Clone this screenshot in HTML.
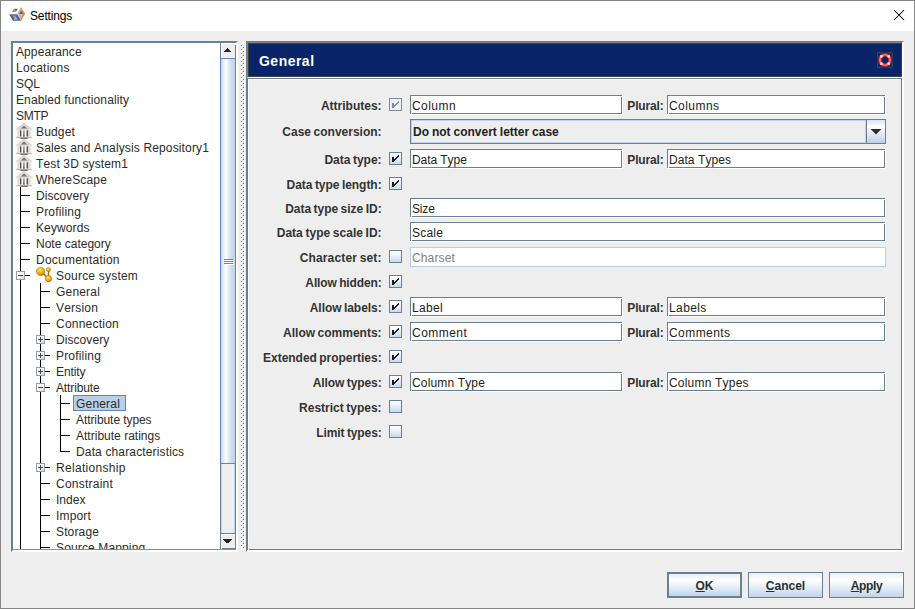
<!DOCTYPE html><html><head><meta charset="utf-8"><title>Settings</title><style>
*{box-sizing:border-box;margin:0;padding:0}
html,body{width:915px;height:609px;overflow:hidden;background:#eeeeee}
body{position:relative;font-kerning:none;font-family:"Liberation Sans",Arial,sans-serif;font-size:12px;color:#222}
.a{position:absolute}
#win{left:0;top:0;width:915px;height:609px;border:1px solid #858585;background:#eeeeee}
#title{left:1px;top:1px;width:913px;height:30px;background:#fff}
#ttext{left:30px;top:8px;letter-spacing:-0.15px;font-size:12px;line-height:16px;color:#000;white-space:nowrap}
/* tree panel */
#tree{left:11px;top:41px;width:227px;height:511px;background:#fff;border-top:2px solid #6b7f93;border-left:2px solid #6b7f93;border-right:2px solid #fff;border-bottom:2px solid #fff}
#treeb{left:13px;top:549px;width:223px;height:1px;background:#7d90a4}
#tv{left:13px;top:43px;width:207px;height:506px;overflow:hidden;background:#fff}
.r{position:absolute;left:0;height:16px;line-height:18px;white-space:nowrap;color:#2b2b2b;font-size:12px}
.ln{position:absolute;background:#000}
.sel{position:absolute;background:#b8cfe5;border:1px solid #6382bf}
.ex{position:absolute;z-index:2;width:9px;height:9px;border:1px solid #9c9c9c;background:linear-gradient(135deg,#fff 0%,#fff 40%,#d4d4d4 100%)}
.ex i{position:absolute;left:1px;top:3px;width:5px;height:1px;background:#2a3f9a}
.ex b{position:absolute;left:3px;top:1px;width:1px;height:5px;background:#2a3f9a}
/* scrollbar */
#sb{left:220px;top:43px;width:16px;height:506px;background:#eeeeee;border-left:1px solid #6b7f93;border-right:1px solid #6b7f93}
.sbl{position:absolute;top:0;width:1px;height:506px;background:#c3d5ea}
#thumb{left:220px;top:58px;width:16px;height:406px;border:1px solid #6382bf;border-right-color:#7187a0;background:linear-gradient(90deg,#c9dbef 0%,#ffffff 36%,#d6e3f2 64%,#bcd1e8 100%)}
.gr{position:absolute;left:3px;width:9px;height:1px;background:#6382bf}
.grw{position:absolute;left:4px;width:9px;height:1px;background:#fff}
/* right panel */
#rp{left:246px;top:41px;width:658px;height:511px;border-top:1px solid #6b7f93;border-left:1px solid #6b7f93;border-right:1px solid #fff;border-bottom:1px solid #fff}
#hd{left:247px;top:42px;width:656px;height:36px;border-top:1px solid #808080;border-left:1px solid #808080;border-right:1px solid #fff;border-bottom:1px solid #fff}
#hd2{left:248px;top:43px;width:654px;height:34px;background:#0a246a;border:1px solid #404040}
#htext{left:259px;top:52px;font-size:14px;line-height:18px;font-weight:bold;color:#fff;white-space:nowrap}
#cp{left:247px;top:78px;width:656px;height:473px}
#cp1{left:247px;top:78px;width:655px;height:472px;border:1px solid #6b7f93}
#cp2{left:248px;top:79px;width:653px;height:470px;border-top:1px solid #fafafa}
#cp2b{left:248px;top:79px;width:1px;height:471px;background:#fafafa}
#cp3{left:247px;top:550px;width:656px;height:1px;background:#fff}
#cp4{left:902px;top:78px;width:1px;height:473px;background:#fff}
.lb{position:absolute;right:533.4px;height:20px;line-height:22px;font-weight:bold;color:#333;white-space:nowrap;font-size:12px;text-align:right}
.pl{position:absolute;left:627.3px;height:20px;line-height:22px;font-weight:bold;color:#333;white-space:nowrap;font-size:12px}
.tf{position:absolute;height:20px;background:#fff;border-right:1px solid #fff;border-bottom:1px solid #fff}
.tf u{position:absolute;left:0;top:0;right:0;bottom:0;border:1px solid #6b7f93;background:#fff;text-decoration:none}
.tf s{position:absolute;left:2px;top:0;height:20px;line-height:22px;text-decoration:none;color:#222;white-space:nowrap;font-size:12px}
.tf i{position:absolute;width:1px;height:1px;background:#fff}
.tf.dis{border:1px solid #b8cfe5}
.tf.dis s{color:#808080;left:1px;top:-1px}
.cb{position:absolute;left:389px;width:13px;height:13px;border:1px solid #6b7f93;background:linear-gradient(180deg,#ffffff 0%,#f4f8fc 25%,#c6d9ee 100%)}
.cb.d{border-color:#7b8da0;background:#f0f0f0}
.cb svg{position:absolute;left:-1px;top:-1px}
.btn{position:absolute;top:572px;width:75px;height:26px;border:1px solid #6b7f93;background:linear-gradient(180deg,#e6eef8 0%,#ffffff 28%,#f1f6fb 45%,#c2d4e8 100%);text-align:center;line-height:26px;font-weight:bold;color:#2e2e2e;font-size:12px}
.btn.def{border-width:2px;line-height:24px}
.btn u{text-decoration:underline}
</style></head><body>
<div id="win" class="a"></div>
<div id="title" class="a"></div>
<svg class="a" style="left:8px;top:6px" width="18" height="16" viewBox="8 6 18 16">
<defs><linearGradient id="og" x1="0" y1="0" x2="1" y2="0"><stop offset="0" stop-color="#efc39c"/><stop offset="0.5" stop-color="#e29a62"/><stop offset="1" stop-color="#d27c3c"/></linearGradient></defs>
<polygon points="9.1,14.2 17.2,14.2 21.2,20.8 13,20.8" fill="#4668a6"/>
<polygon points="12.2,15.5 15.9,15.5 14.3,18.3" fill="#e08a3c"/>
<polygon points="15.6,16.6 17.6,19.4 13.8,19.4" fill="#b4c6ee"/>
<polygon points="21,7 25.1,13.8 21.2,20.5 17.3,13.6" fill="url(#og)"/>
<polygon points="21,10.4 23,14 19.2,14" fill="#4668a6"/>
<polygon points="19.4,14 22.8,14 21.2,17.2" fill="#b4c6ee"/>
<polygon points="13.6,8.8 14.7,8.8 16,12 12,12" fill="#d98a4a"/>
<polygon points="14.6,8.8 17.9,8.8 16.5,11 15.5,11" fill="#4668a6"/>
</svg>
<div id="ttext" class="a">Settings</div>
<svg class="a" style="left:893px;top:9px" width="13" height="13" viewBox="0 0 13 13"><path d="M1 1 L11 11 M11 1 L1 11" stroke="#000" stroke-width="1.05" fill="none"/></svg>
<div id="tree" class="a"></div>
<div id="tv" class="a">
<div class="r" style="top:0px"><span style="position:absolute;left:3px;top:0"><span style="letter-spacing:0.098px">Appearance</span></span></div>
<div class="r" style="top:16px"><span style="position:absolute;left:3px;top:0"><span style="letter-spacing:0.265px">Locations</span></span></div>
<div class="r" style="top:32px"><span style="position:absolute;left:3px;top:0"><span style="letter-spacing:-0.004px">SQL</span></span></div>
<div class="r" style="top:48px"><span style="position:absolute;left:3px;top:0"><span style="letter-spacing:0.108px">Enabled functionality</span></span></div>
<div class="r" style="top:64px"><span style="position:absolute;left:3px;top:0"><span style="letter-spacing:-0.271px">SMTP</span></span></div>
<div class="r" style="top:80px"><svg style="position:absolute;left:3px;top:0" width="16" height="17" viewBox="0 0 16 17">
<polygon points="8,0.1 16,6.2 15.4,6.9 0.6,6.9 0,6.2" fill="#e0e0e0"/>
<path d="M8 0.4 L15.6 6.2 M8 0.4 L0.4 6.2" stroke="#b4b4b4" stroke-width="0.9" fill="none" stroke-dasharray="1.1 0.7"/>
<polygon points="8,2.6 11.4,5.5 4.6,5.5" fill="#767676"/>
<rect x="3.6" y="5.5" width="8.8" height="0.8" fill="#a8a8a8"/>
<rect x="1.2" y="6.6" width="13.6" height="7.6" fill="#eeeeee"/>
<rect x="1.4" y="7" width="2.3" height="7.1" fill="#dedede"/>
<rect x="12.3" y="7" width="2.3" height="7.1" fill="#dedede"/>
<rect x="4" y="7.3" width="1.5" height="6.2" fill="#505050"/>
<rect x="5.7" y="7" width="1.5" height="7" fill="#ffffff"/>
<rect x="7.3" y="7.4" width="1.35" height="3.7" fill="#747474"/>
<rect x="7.3" y="11.1" width="1.35" height="2.7" fill="#7c3208"/>
<rect x="8.85" y="7" width="1.5" height="7" fill="#ffffff"/>
<rect x="10.6" y="7.3" width="1.5" height="6.2" fill="#505050"/>
<rect x="0.3" y="14" width="15.4" height="1.1" fill="#b8b8b8"/>
<rect x="4.4" y="14.7" width="7.4" height="1.3" fill="#707070"/>
</svg><span style="position:absolute;left:23px;top:0"><span style="letter-spacing:0.161px">Budget</span></span></div>
<div class="r" style="top:96px"><svg style="position:absolute;left:3px;top:0" width="16" height="17" viewBox="0 0 16 17">
<polygon points="8,0.1 16,6.2 15.4,6.9 0.6,6.9 0,6.2" fill="#e0e0e0"/>
<path d="M8 0.4 L15.6 6.2 M8 0.4 L0.4 6.2" stroke="#b4b4b4" stroke-width="0.9" fill="none" stroke-dasharray="1.1 0.7"/>
<polygon points="8,2.6 11.4,5.5 4.6,5.5" fill="#767676"/>
<rect x="3.6" y="5.5" width="8.8" height="0.8" fill="#a8a8a8"/>
<rect x="1.2" y="6.6" width="13.6" height="7.6" fill="#eeeeee"/>
<rect x="1.4" y="7" width="2.3" height="7.1" fill="#dedede"/>
<rect x="12.3" y="7" width="2.3" height="7.1" fill="#dedede"/>
<rect x="4" y="7.3" width="1.5" height="6.2" fill="#505050"/>
<rect x="5.7" y="7" width="1.5" height="7" fill="#ffffff"/>
<rect x="7.3" y="7.4" width="1.35" height="3.7" fill="#747474"/>
<rect x="7.3" y="11.1" width="1.35" height="2.7" fill="#7c3208"/>
<rect x="8.85" y="7" width="1.5" height="7" fill="#ffffff"/>
<rect x="10.6" y="7.3" width="1.5" height="6.2" fill="#505050"/>
<rect x="0.3" y="14" width="15.4" height="1.1" fill="#b8b8b8"/>
<rect x="4.4" y="14.7" width="7.4" height="1.3" fill="#707070"/>
</svg><span style="position:absolute;left:23px;top:0"><span style="letter-spacing:0.141px">Sales and Analysis Repository1</span></span></div>
<div class="r" style="top:112px"><svg style="position:absolute;left:3px;top:0" width="16" height="17" viewBox="0 0 16 17">
<polygon points="8,0.1 16,6.2 15.4,6.9 0.6,6.9 0,6.2" fill="#e0e0e0"/>
<path d="M8 0.4 L15.6 6.2 M8 0.4 L0.4 6.2" stroke="#b4b4b4" stroke-width="0.9" fill="none" stroke-dasharray="1.1 0.7"/>
<polygon points="8,2.6 11.4,5.5 4.6,5.5" fill="#767676"/>
<rect x="3.6" y="5.5" width="8.8" height="0.8" fill="#a8a8a8"/>
<rect x="1.2" y="6.6" width="13.6" height="7.6" fill="#eeeeee"/>
<rect x="1.4" y="7" width="2.3" height="7.1" fill="#dedede"/>
<rect x="12.3" y="7" width="2.3" height="7.1" fill="#dedede"/>
<rect x="4" y="7.3" width="1.5" height="6.2" fill="#505050"/>
<rect x="5.7" y="7" width="1.5" height="7" fill="#ffffff"/>
<rect x="7.3" y="7.4" width="1.35" height="3.7" fill="#747474"/>
<rect x="7.3" y="11.1" width="1.35" height="2.7" fill="#7c3208"/>
<rect x="8.85" y="7" width="1.5" height="7" fill="#ffffff"/>
<rect x="10.6" y="7.3" width="1.5" height="6.2" fill="#505050"/>
<rect x="0.3" y="14" width="15.4" height="1.1" fill="#b8b8b8"/>
<rect x="4.4" y="14.7" width="7.4" height="1.3" fill="#707070"/>
</svg><span style="position:absolute;left:23px;top:0"><span style="letter-spacing:0.131px">Test 3D system1</span></span></div>
<div class="r" style="top:128px"><svg style="position:absolute;left:3px;top:0" width="16" height="17" viewBox="0 0 16 17">
<polygon points="8,0.1 16,6.2 15.4,6.9 0.6,6.9 0,6.2" fill="#e0e0e0"/>
<path d="M8 0.4 L15.6 6.2 M8 0.4 L0.4 6.2" stroke="#b4b4b4" stroke-width="0.9" fill="none" stroke-dasharray="1.1 0.7"/>
<polygon points="8,2.6 11.4,5.5 4.6,5.5" fill="#767676"/>
<rect x="3.6" y="5.5" width="8.8" height="0.8" fill="#a8a8a8"/>
<rect x="1.2" y="6.6" width="13.6" height="7.6" fill="#eeeeee"/>
<rect x="1.4" y="7" width="2.3" height="7.1" fill="#dedede"/>
<rect x="12.3" y="7" width="2.3" height="7.1" fill="#dedede"/>
<rect x="4" y="7.3" width="1.5" height="6.2" fill="#505050"/>
<rect x="5.7" y="7" width="1.5" height="7" fill="#ffffff"/>
<rect x="7.3" y="7.4" width="1.35" height="3.7" fill="#747474"/>
<rect x="7.3" y="11.1" width="1.35" height="2.7" fill="#7c3208"/>
<rect x="8.85" y="7" width="1.5" height="7" fill="#ffffff"/>
<rect x="10.6" y="7.3" width="1.5" height="6.2" fill="#505050"/>
<rect x="0.3" y="14" width="15.4" height="1.1" fill="#b8b8b8"/>
<rect x="4.4" y="14.7" width="7.4" height="1.3" fill="#707070"/>
</svg><span style="position:absolute;left:23px;top:0"><span style="letter-spacing:0.163px">WhereScape</span></span></div>
<div class="r" style="top:144px"><span class="ln" style="left:7px;top:8px;width:10px;height:1px"></span><span style="position:absolute;left:23px;top:0"><span style="letter-spacing:0.064px">Discovery</span></span></div>
<div class="r" style="top:160px"><span class="ln" style="left:7px;top:8px;width:10px;height:1px"></span><span style="position:absolute;left:23px;top:0"><span style="letter-spacing:0.183px">Profiling</span></span></div>
<div class="r" style="top:176px"><span class="ln" style="left:7px;top:8px;width:10px;height:1px"></span><span style="position:absolute;left:23px;top:0"><span style="letter-spacing:0.102px">Keywords</span></span></div>
<div class="r" style="top:192px"><span class="ln" style="left:7px;top:8px;width:10px;height:1px"></span><span style="position:absolute;left:23px;top:0"><span style="letter-spacing:0.003px">Note category</span></span></div>
<div class="r" style="top:208px"><span class="ln" style="left:7px;top:8px;width:10px;height:1px"></span><span style="position:absolute;left:23px;top:0"><span style="letter-spacing:0.234px">Documentation</span></span></div>
<div class="r" style="top:224px"><span class="ln" style="left:12px;top:8px;width:5px;height:1px"></span><span class="ex" style="left:3px;top:4px"><i></i></span><svg style="position:absolute;left:23px;top:0" width="17" height="16" viewBox="0 0 17 16">
<defs><radialGradient id="gb" cx="0.42" cy="0.32" r="0.7"><stop offset="0" stop-color="#fff0a8"/><stop offset="0.3" stop-color="#fcc622"/><stop offset="0.72" stop-color="#e6a20e"/><stop offset="1" stop-color="#96640e"/></radialGradient></defs>
<path d="M5 4.5 L12.5 11.6 M12.5 2.6 L12.5 11.6" stroke="#9a6c20" stroke-width="1.5" fill="none"/>
<ellipse cx="10.5" cy="15" rx="3.5" ry="0.8" fill="#d8c8a0" opacity="0.5"/>
<circle cx="4.6" cy="4.4" r="4.2" fill="url(#gb)" stroke="#a06e14" stroke-width="0.5"/>
<circle cx="12.5" cy="2.5" r="2.1" fill="url(#gb)" stroke="#a06e14" stroke-width="0.5"/>
<circle cx="12.5" cy="11.6" r="3.2" fill="url(#gb)" stroke="#a06e14" stroke-width="0.5"/>
</svg><span style="position:absolute;left:43px;top:0"><span style="letter-spacing:0.203px">Source system</span></span></div>
<div class="r" style="top:240px"><span class="ln" style="left:27px;top:8px;width:10px;height:1px"></span><span style="position:absolute;left:43px;top:0"><span style="letter-spacing:0.187px">General</span></span></div>
<div class="r" style="top:256px"><span class="ln" style="left:27px;top:8px;width:10px;height:1px"></span><span style="position:absolute;left:43px;top:0"><span style="letter-spacing:0.188px">Version</span></span></div>
<div class="r" style="top:272px"><span class="ln" style="left:27px;top:8px;width:10px;height:1px"></span><span style="position:absolute;left:43px;top:0"><span style="letter-spacing:0.229px">Connection</span></span></div>
<div class="r" style="top:288px"><span class="ln" style="left:32px;top:8px;width:5px;height:1px"></span><span class="ex" style="left:23px;top:4px"><i></i><b></b></span><span style="position:absolute;left:43px;top:0"><span style="letter-spacing:0.064px">Discovery</span></span></div>
<div class="r" style="top:304px"><span class="ln" style="left:32px;top:8px;width:5px;height:1px"></span><span class="ex" style="left:23px;top:4px"><i></i><b></b></span><span style="position:absolute;left:43px;top:0"><span style="letter-spacing:0.183px">Profiling</span></span></div>
<div class="r" style="top:320px"><span class="ln" style="left:32px;top:8px;width:5px;height:1px"></span><span class="ex" style="left:23px;top:4px"><i></i><b></b></span><span style="position:absolute;left:43px;top:0"><span style="letter-spacing:-0.127px">Entity</span></span></div>
<div class="r" style="top:336px"><span class="ln" style="left:32px;top:8px;width:5px;height:1px"></span><span class="ex" style="left:23px;top:4px"><i></i></span><span style="position:absolute;left:43px;top:0"><span style="letter-spacing:-0.132px">Attribute</span></span></div>
<div class="r" style="top:352px"><span class="ln" style="left:47px;top:8px;width:10px;height:1px"></span><span class="sel" style="left:60px;top:0;width:53px;height:16px"></span><span style="position:absolute;left:63px;top:0"><span style="letter-spacing:0.187px">General</span></span></div>
<div class="r" style="top:368px"><span class="ln" style="left:47px;top:8px;width:10px;height:1px"></span><span style="position:absolute;left:63px;top:0"><span style="letter-spacing:-0.080px">Attribute types</span></span></div>
<div class="r" style="top:384px"><span class="ln" style="left:47px;top:8px;width:10px;height:1px"></span><span style="position:absolute;left:63px;top:0"><span style="letter-spacing:0.012px">Attribute ratings</span></span></div>
<div class="r" style="top:400px"><span class="ln" style="left:47px;top:8px;width:10px;height:1px"></span><span style="position:absolute;left:63px;top:0"><span style="letter-spacing:0.144px">Data characteristics</span></span></div>
<div class="r" style="top:416px"><span class="ln" style="left:32px;top:8px;width:5px;height:1px"></span><span class="ex" style="left:23px;top:4px"><i></i><b></b></span><span style="position:absolute;left:43px;top:0"><span style="letter-spacing:0.309px">Relationship</span></span></div>
<div class="r" style="top:432px"><span class="ln" style="left:27px;top:8px;width:10px;height:1px"></span><span style="position:absolute;left:43px;top:0"><span style="letter-spacing:0.231px">Constraint</span></span></div>
<div class="r" style="top:448px"><span class="ln" style="left:27px;top:8px;width:10px;height:1px"></span><span style="position:absolute;left:43px;top:0"><span style="letter-spacing:0.029px">Index</span></span></div>
<div class="r" style="top:464px"><span class="ln" style="left:27px;top:8px;width:10px;height:1px"></span><span style="position:absolute;left:43px;top:0"><span style="letter-spacing:0.165px">Import</span></span></div>
<div class="r" style="top:480px"><span class="ln" style="left:27px;top:8px;width:10px;height:1px"></span><span style="position:absolute;left:43px;top:0"><span style="letter-spacing:0.139px">Storage</span></span></div>
<div class="r" style="top:496px"><span class="ln" style="left:27px;top:8px;width:10px;height:1px"></span><span style="position:absolute;left:43px;top:0"><span style="letter-spacing:0.133px">Source Mapping</span></span></div>
<span class="ln" style="left:7px;top:144px;width:1px;height:374px"></span>
<span class="ln" style="left:27px;top:240px;width:1px;height:278px"></span>
<span class="ln" style="left:47px;top:352px;width:1px;height:57px"></span>
</div>
<div id="treeb" class="a"></div>
<div id="sb" class="a"><span class="sbl" style="left:0"></span><span class="sbl" style="left:13px"></span></div>
<div class="a" style="left:221px;top:43px;width:14px;height:15px;background:#eeeeee;border-top:1px solid #fff;border-left:1px solid #fff"></div>
<svg class="a" style="left:221px;top:43px" width="14" height="15" viewBox="221 43 14 15" shape-rendering="crispEdges"><path d="M227 48h1v1h-1z M226 49h3v1h-3z M225 50h5v1h-5z M224 51h7v1h-7z" fill="#262626"/></svg>
<div class="a" style="left:235px;top:43px;width:1px;height:2px;background:#f6f6f6"></div>
<div class="a" style="left:221px;top:533px;width:14px;height:16px;background:#eeeeee;border-top:1px solid #6b7f93;border-bottom:1px solid #6b7f93"></div>
<div class="a" style="left:221px;top:534px;width:14px;height:15px;border-top:1px solid #fff;border-left:1px solid #fff"></div>
<svg class="a" style="left:221px;top:534px" width="14" height="15" viewBox="221 534 14 15" shape-rendering="crispEdges"><path d="M223 539h9v1h-9z M224 540h7v1h-7z M225 541h5v1h-5z M226 542h3v1h-3z" fill="#262626"/></svg>
<div id="thumb" class="a"><span class="gr" style="top:200px"></span><span class="grw" style="top:201px"></span><span class="gr" style="top:202px"></span><span class="grw" style="top:203px"></span><span class="gr" style="top:204px"></span><span class="grw" style="top:205px"></span></div>
<svg class="a" style="left:240px;top:44px" width="6" height="506"><defs><pattern id="dp" x="0" y="1" width="6" height="4" patternUnits="userSpaceOnUse"><rect x="1" y="0" width="1" height="1" fill="#6d7d90"/><rect x="2" y="1" width="1" height="1" fill="#fff"/><rect x="3" y="2" width="1" height="1" fill="#6d7d90"/><rect x="4" y="3" width="1" height="1" fill="#fff"/></pattern></defs><rect x="0" y="1" width="6" height="504" fill="url(#dp)"/></svg>
<div id="rp" class="a"></div>
<div id="hd" class="a"></div><div id="hd2" class="a"></div>
<div id="htext" class="a"><span style="letter-spacing:0.480px">General</span></div>
<svg class="a" style="left:875px;top:50px" width="20" height="20" viewBox="-10 -10 20 20">
<defs><radialGradient id="lr" cx="0" cy="0" r="7" gradientUnits="userSpaceOnUse"><stop offset="0.44" stop-color="#a00c14"/><stop offset="0.58" stop-color="#e83a40"/><stop offset="0.74" stop-color="#ff8e8e"/><stop offset="0.88" stop-color="#e0282e"/><stop offset="1" stop-color="#b01018"/></radialGradient></defs>
<path d="M-6.6 -7.6 Q0 -5.6 6.6 -7.6 Q7.6 -7.6 7.6 -6.6 Q5.6 0 7.6 6.6 Q7.6 7.6 6.6 7.6 Q0 5.6 -6.6 7.6 Q-7.6 7.6 -7.6 6.6 Q-5.6 0 -7.6 -6.6 Q-7.6 -7.6 -6.6 -7.6 Z" fill="none" stroke="#8f7a2c" stroke-width="0.7" opacity="0.7"/>
<circle cx="0" cy="0" r="5.05" fill="none" stroke="url(#lr)" stroke-width="3.7"/>
<g stroke="#eaf0f6" stroke-width="1.8">
<line x1="2.7" y1="-2.7" x2="4.55" y2="-4.55"/><line x1="-2.7" y1="-2.7" x2="-4.55" y2="-4.55"/><line x1="2.7" y1="2.7" x2="4.55" y2="4.55"/><line x1="-2.7" y1="2.7" x2="-4.55" y2="4.55"/>
</g></svg>
<div id="cp1" class="a"></div><div id="cp2" class="a"></div><div id="cp2b" class="a"></div><div id="cp3" class="a"></div><div id="cp4" class="a"></div>
<div class="lb" style="top:95px"><span style="word-spacing:-0.8px;letter-spacing:0.000px">Attributes:</span></div>
<div class="cb d" style="top:98px"><svg width="13" height="13" viewBox="0 0 13 13" shape-rendering="crispEdges"><path d="M3 5h2v5h-2z M5 7h1v2h-1z M6 6h1v2h-1z M7 5h1v2h-1z M8 4h1v2h-1z M9 3h1v2h-1z" fill="#7b8da0"/></svg></div>
<div class="tf" style="left:410px;top:95px;width:213px"><u></u><i style="left:1px;top:18px"></i><i style="right:0;top:1px"></i><s><span style="letter-spacing:0.442px">Column</span></s></div>
<div class="pl" style="top:95px"><span style="word-spacing:-0.8px;letter-spacing:-0.143px">Plural:</span></div>
<div class="tf" style="left:667px;top:95px;width:219px"><u></u><i style="left:1px;top:18px"></i><i style="right:0;top:1px"></i><s><span style="letter-spacing:0.450px">Columns</span></s></div>
<div class="lb" style="top:121px"><span style="word-spacing:-0.8px;letter-spacing:0.000px">Case conversion:</span></div>
<div class="a" style="left:410px;top:119px;width:476px;height:25px;border:1px solid #6b7f93;background:#eeeeee"><div class="a" style="left:0;top:0;width:455px;height:23px;border:1px solid #bfd3ea"></div><div class="a" style="left:2px;top:1px;height:22px;line-height:22px;font-weight:bold;color:#222;white-space:nowrap;word-spacing:-0.4px">Do not convert letter case</div><div class="a" style="left:455px;top:0;width:19px;height:23px;border-left:1px solid #6b7f93;background:linear-gradient(180deg,#dbe7f4 0%,#ffffff 30%,#eef3f9 50%,#bacfe5 100%)"></div><svg class="a" style="left:456px;top:0" width="18" height="23" viewBox="0 0 18 23"><polygon points="3.5,9 14.5,9 9,14.6" fill="#2d2d2d"/></svg></div>
<div class="lb" style="top:149px"><span style="word-spacing:-0.8px;letter-spacing:0.000px">Data type:</span></div>
<div class="cb" style="top:152px"><svg width="13" height="13" viewBox="0 0 13 13" shape-rendering="crispEdges"><path d="M3 5h2v5h-2z M5 7h1v2h-1z M6 6h1v2h-1z M7 5h1v2h-1z M8 4h1v2h-1z M9 3h1v2h-1z" fill="#1a1a1a"/></svg></div>
<div class="tf" style="left:410px;top:149px;width:213px"><u></u><i style="left:1px;top:18px"></i><i style="right:0;top:1px"></i><s><span style="letter-spacing:-0.068px">Data Type</span></s></div>
<div class="pl" style="top:149px"><span style="word-spacing:-0.8px;letter-spacing:-0.143px">Plural:</span></div>
<div class="tf" style="left:667px;top:149px;width:219px"><u></u><i style="left:1px;top:18px"></i><i style="right:0;top:1px"></i><s><span style="letter-spacing:0.064px">Data Types</span></s></div>
<div class="lb" style="top:174px"><span style="word-spacing:-0.8px;letter-spacing:-0.041px">Data type length:</span></div>
<div class="cb" style="top:177px"><svg width="13" height="13" viewBox="0 0 13 13" shape-rendering="crispEdges"><path d="M3 5h2v5h-2z M5 7h1v2h-1z M6 6h1v2h-1z M7 5h1v2h-1z M8 4h1v2h-1z M9 3h1v2h-1z" fill="#1a1a1a"/></svg></div>
<div class="lb" style="top:198px"><span style="word-spacing:-0.8px;letter-spacing:-0.028px">Data type size ID:</span></div>
<div class="tf" style="left:410px;top:198px;width:476px"><u></u><i style="left:1px;top:18px"></i><i style="right:0;top:1px"></i><s><span style="letter-spacing:-0.148px">Size</span></s></div>
<div class="lb" style="top:222px"><span style="word-spacing:-0.8px;letter-spacing:0.032px">Data type scale ID:</span></div>
<div class="tf" style="left:410px;top:222px;width:476px"><u></u><i style="left:1px;top:18px"></i><i style="right:0;top:1px"></i><s><span style="letter-spacing:0.196px">Scale</span></s></div>
<div class="lb" style="top:247px"><span style="word-spacing:-0.8px;letter-spacing:0.143px">Character set:</span></div>
<div class="cb" style="top:250px"></div>
<div class="tf dis" style="left:410px;top:247px;width:476px"><s><span style="letter-spacing:0.140px">Charset</span></s></div>
<div class="lb" style="top:272px"><span style="word-spacing:-0.8px;letter-spacing:-0.123px">Allow hidden:</span></div>
<div class="cb" style="top:275px"><svg width="13" height="13" viewBox="0 0 13 13" shape-rendering="crispEdges"><path d="M3 5h2v5h-2z M5 7h1v2h-1z M6 6h1v2h-1z M7 5h1v2h-1z M8 4h1v2h-1z M9 3h1v2h-1z" fill="#1a1a1a"/></svg></div>
<div class="lb" style="top:297px"><span style="word-spacing:-0.8px;letter-spacing:-0.054px">Allow labels:</span></div>
<div class="cb" style="top:300px"><svg width="13" height="13" viewBox="0 0 13 13" shape-rendering="crispEdges"><path d="M3 5h2v5h-2z M5 7h1v2h-1z M6 6h1v2h-1z M7 5h1v2h-1z M8 4h1v2h-1z M9 3h1v2h-1z" fill="#1a1a1a"/></svg></div>
<div class="tf" style="left:410px;top:297px;width:213px"><u></u><i style="left:1px;top:18px"></i><i style="right:0;top:1px"></i><s><span style="letter-spacing:0.328px">Label</span></s></div>
<div class="pl" style="top:297px"><span style="word-spacing:-0.8px;letter-spacing:-0.143px">Plural:</span></div>
<div class="tf" style="left:667px;top:297px;width:219px"><u></u><i style="left:1px;top:18px"></i><i style="right:0;top:1px"></i><s><span style="letter-spacing:0.398px">Labels</span></s></div>
<div class="lb" style="top:322px"><span style="word-spacing:-0.8px;letter-spacing:0.000px">Allow comments:</span></div>
<div class="cb" style="top:325px"><svg width="13" height="13" viewBox="0 0 13 13" shape-rendering="crispEdges"><path d="M3 5h2v5h-2z M5 7h1v2h-1z M6 6h1v2h-1z M7 5h1v2h-1z M8 4h1v2h-1z M9 3h1v2h-1z" fill="#1a1a1a"/></svg></div>
<div class="tf" style="left:410px;top:322px;width:213px"><u></u><i style="left:1px;top:18px"></i><i style="right:0;top:1px"></i><s><span style="letter-spacing:0.462px">Comment</span></s></div>
<div class="pl" style="top:322px"><span style="word-spacing:-0.8px;letter-spacing:-0.143px">Plural:</span></div>
<div class="tf" style="left:667px;top:322px;width:219px"><u></u><i style="left:1px;top:18px"></i><i style="right:0;top:1px"></i><s><span style="letter-spacing:0.436px">Comments</span></s></div>
<div class="lb" style="top:347px"><span style="word-spacing:-0.8px;letter-spacing:-0.035px">Extended properties:</span></div>
<div class="cb" style="top:350px"><svg width="13" height="13" viewBox="0 0 13 13" shape-rendering="crispEdges"><path d="M3 5h2v5h-2z M5 7h1v2h-1z M6 6h1v2h-1z M7 5h1v2h-1z M8 4h1v2h-1z M9 3h1v2h-1z" fill="#1a1a1a"/></svg></div>
<div class="lb" style="top:372px"><span style="word-spacing:-0.8px;letter-spacing:-0.083px">Allow types:</span></div>
<div class="cb" style="top:375px"><svg width="13" height="13" viewBox="0 0 13 13" shape-rendering="crispEdges"><path d="M3 5h2v5h-2z M5 7h1v2h-1z M6 6h1v2h-1z M7 5h1v2h-1z M8 4h1v2h-1z M9 3h1v2h-1z" fill="#1a1a1a"/></svg></div>
<div class="tf" style="left:410px;top:372px;width:213px"><u></u><i style="left:1px;top:18px"></i><i style="right:0;top:1px"></i><s><span style="letter-spacing:0.149px">Column Type</span></s></div>
<div class="pl" style="top:372px"><span style="word-spacing:-0.8px;letter-spacing:-0.143px">Plural:</span></div>
<div class="tf" style="left:667px;top:372px;width:219px"><u></u><i style="left:1px;top:18px"></i><i style="right:0;top:1px"></i><s><span style="letter-spacing:0.199px">Column Types</span></s></div>
<div class="lb" style="top:397px"><span style="word-spacing:-0.8px;letter-spacing:0.000px">Restrict types:</span></div>
<div class="cb" style="top:400px"></div>
<div class="lb" style="top:422px"><span style="word-spacing:-0.8px;letter-spacing:-0.108px">Limit types:</span></div>
<div class="cb" style="top:425px"></div>
<div class="btn def" style="left:667px"><u>O</u>K</div>
<div class="btn" style="left:748px"><u>C</u>ancel</div>
<div class="btn" style="left:829px;letter-spacing:-0.4px"><u>A</u>pply</div>
</body></html>
